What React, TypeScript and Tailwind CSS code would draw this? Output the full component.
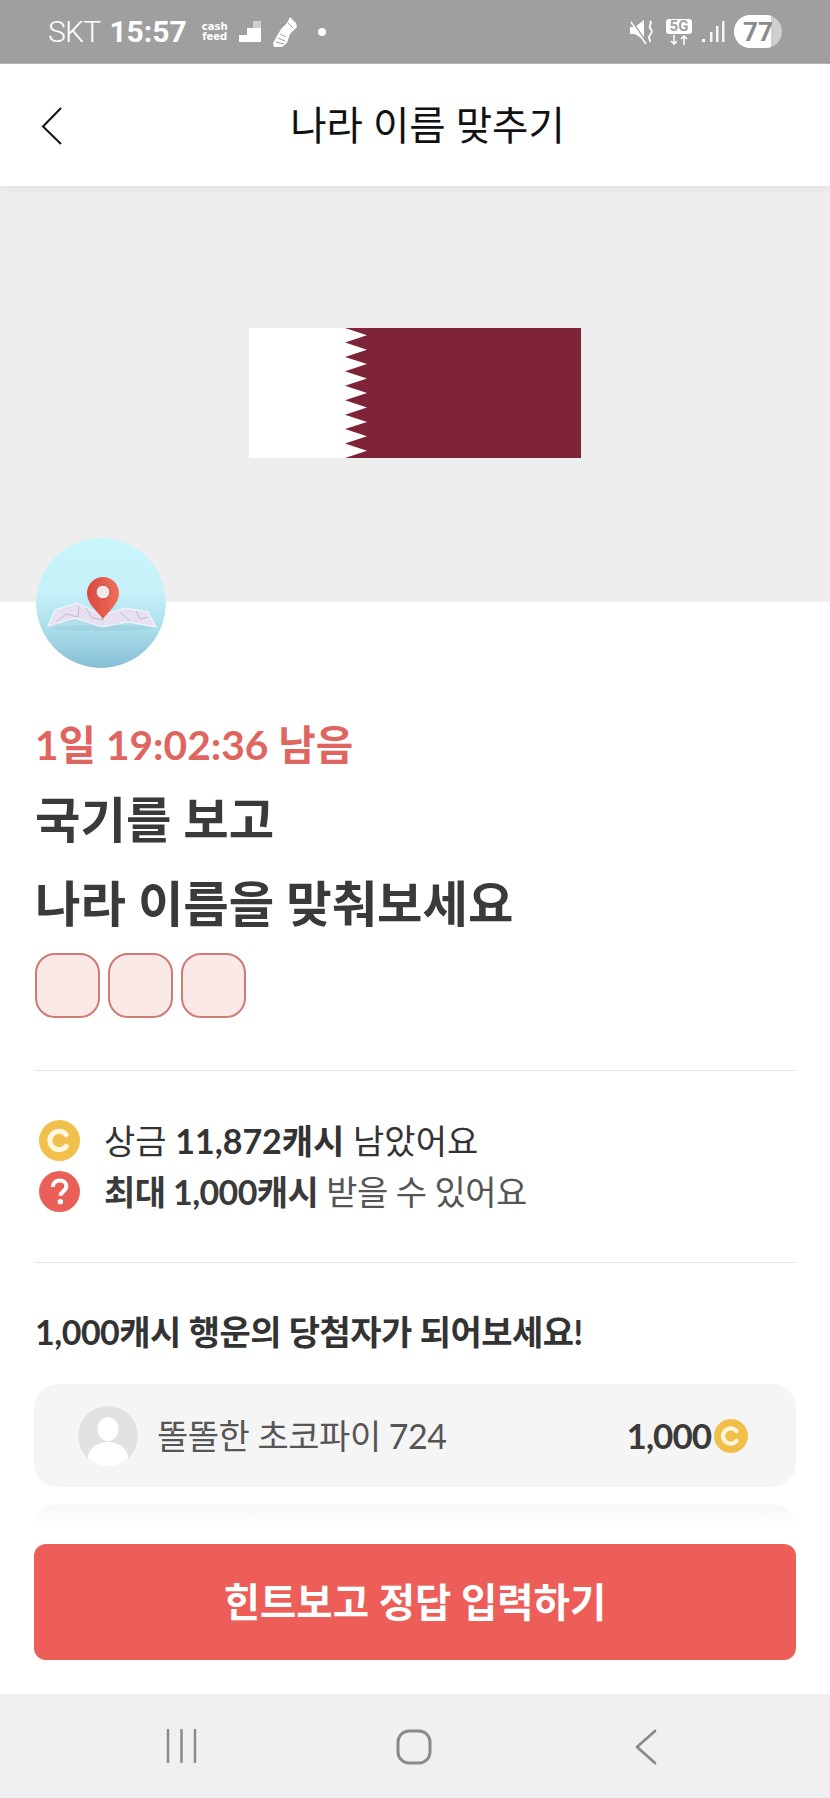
const font = "font-['Lato','Noto_Sans_CJK_KR',sans-serif]";

const Coin = ({ size }: { size: number }) => (
  <svg width={size} height={size} viewBox="0 0 40 40" className="shrink-0">
    <circle cx="20" cy="20" r="20" fill="#f1c04a" />
    <path d="M26.5 14.2a9 9 0 1 0 0 11.6" fill="none" stroke="#fff6df" strokeWidth="5" strokeLinecap="round" />
  </svg>
);

const Question = () => (
  <svg width="41" height="41" viewBox="0 0 40 40" className="shrink-0">
    <circle cx="20" cy="20" r="20" fill="#ea5f58" />
    <path d="M13.5 15.5c0-3.8 2.9-6.2 6.7-6.2 3.700 0 6.500 2.300 6.500 5.600 0 4.800-5.700 5-5.700 9.300" fill="none" stroke="#fff" strokeWidth="4" />
    <circle cx="20.800" cy="30" r="2.700" fill="#fff" />
  </svg>
);

const QatarFlag = () => {
  const teeth = 9;
  const h = 130;
  const step = h / teeth;
  let d = "M96 0";
  for (let i = 0; i < teeth; i++) {
    d += ` L118 ${step * i + step / 2} L96 ${step * (i + 1)}`;
  }
  d += " L0 130 L0 0 Z";
  return (
    <svg width="332" height="130" viewBox="0 0 332 130" className="block">
      <rect width="332" height="130" fill="#7f2339" />
      <path d={d} fill="#fff" />
    </svg>
  );
};

const MapBadge = () => (
  <svg width="130" height="130" viewBox="0 0 130 130" className="block rounded-full">
    <defs>
      <linearGradient id="bg" x1="0" y1="0" x2="0" y2="1">
        <stop offset="0" stopColor="#c9f5fd" />
        <stop offset="0.42" stopColor="#c6f1f9" />
        <stop offset="0.72" stopColor="#a9dce9" />
        <stop offset="1" stopColor="#86bed5" />
      </linearGradient>
      <linearGradient id="pin" x1="0" y1="0" x2="1" y2="0">
        <stop offset="0" stopColor="#d9483f" />
        <stop offset="1" stopColor="#f0705a" />
      </linearGradient>
    </defs>
    <circle cx="65" cy="65" r="65" fill="url(#bg)" />
    <ellipse cx="66" cy="90" rx="50" ry="3" fill="#8fc3d6" opacity="0.35" />
    <path d="M12 88 L19 72 L41 65 L66 77 L89 70 L112 74 L120 89 L92 84 L66 89 L39 80 Z" fill="#e6e0f1" stroke="#f6f4fb" strokeWidth="1.200" />
    <path d="M20 84 L30 76 L42 79 L43 68 M50 70 L56 80 L68 82 M84 74 L94 83 M100 73 L104 81 L112 79" fill="none" stroke="#bdb3cf" strokeWidth="0.900" />
    <path d="M51 55 a16 16 0 0 1 32 0 C83 66 72 74 67 81 C62 74 51 66 51 55 Z" fill="url(#pin)" />
    <circle cx="67" cy="54" r="7" fill="#f4e9e4" stroke="#c8473f" strokeWidth="1" />
  </svg>
);

const Shoe = () => (
  <svg width="26" height="32" viewBox="0 0 26 32">
    <path d="M17 1 L23 7 L24 11 L17 18 L14 27 L9 31 L1 31 L0 27 L4 20 L8 13 L11 10 L14 7 Z" fill="#fff" />
    <path d="M7 18l6 3M5 22l7 3M3 26l8 2M15 7l5 5" fill="none" stroke="#9f9f9f" strokeWidth="1" />
  </svg>
);

const StatusBar = () => (
  <div className="h-16 shrink-0 bg-[#9f9f9f] flex items-center text-white pl-12 pr-[48px] border-b border-[#b8b8b8] font-['Roboto','Noto_Sans',sans-serif]">
    <span className="text-[30px] font-light leading-none tracking-tight">SKT</span>
    <span className="text-[30px] font-bold leading-none ml-[9px]">15:57</span>
    <span className="font-['DejaVu_Sans',sans-serif] text-[10px] font-bold leading-[10px] text-center ml-[12px] w-8">
      cash
      <br />
      feed
    </span>
    <svg width="22" height="22" viewBox="0 0 22 22" className="ml-[8px]">
      <rect x="14" y="0" width="8" height="8" fill="#cfcfcf" />
      <path d="M8 7h14v7H8z M0 14h22v7H0z" fill="#fff" />
    </svg>
    <div className="ml-[12px]">
      <Shoe />
    </div>
    <span className="size-2 rounded-full bg-white ml-[19px]" />
    <div className="ml-auto flex items-center">
      <svg width="24" height="26" viewBox="0 0 24 26" fill="#fff">
        <path d="M0 8h5l9-7v20l-9-6H0z" />
        <path d="M1 1l15 22" stroke="#9f9f9f" strokeWidth="2" />
        <path d="M1 3l15 22" stroke="#fff" strokeWidth="1.500" />
        <path d="M20 2c3 3-2 4 0 7s3 3 0 7 1 4 0 7" fill="none" stroke="#fff" strokeWidth="1.800" />
      </svg>
      <div className="ml-[12px] flex flex-col items-center w-[26px]">
        <span className="bg-white text-[#9f9f9f] rounded-[3px] w-[26px] h-[15px] text-[15px] font-bold leading-[15px] text-center">5G</span>
        <svg width="20" height="10" viewBox="0 0 20 10" className="mt-[1px]">
          <path d="M5 0v9M2 6l3 3 3-3M15 10V1M12 4l3-3 3 3" fill="none" stroke="#fff" strokeWidth="1.500" />
        </svg>
      </div>
      <svg width="24" height="24" viewBox="0 0 24 24" className="ml-[9px]" fill="#fff">
        <rect x="1" y="19" width="3" height="3" />
        <rect x="9" y="12" width="2.500" height="10" opacity="0.900" />
        <rect x="15" y="6" width="2.500" height="16" opacity="0.900" />
        <rect x="21" y="1" width="2.500" height="21" opacity="0.900" />
      </svg>
      <div className="ml-[9px] relative w-[48px] h-[33px] rounded-full overflow-hidden bg-[#cfcfcf] flex items-center justify-center">
        <div className="absolute inset-y-0 left-0 w-[37px] bg-white" />
        <span className="relative text-[26px] font-bold text-[#8a8a8a] leading-none">77</span>
      </div>
    </div>
  </div>
);

const App = () => {
  return (
    <div className={`${font} w-[830px] h-[1798px] bg-white flex flex-col overflow-hidden`}>
      <StatusBar />
      <div className="h-[122px] shrink-0 bg-white flex items-center relative z-10 shadow-[0_2px_8px_rgba(0,0,0,0.06)]">
        <svg width="24" height="40" viewBox="0 0 24 40" className="ml-[40px] mt-[2px]">
          <path d="M21 2 L3 20.500 L21 38" fill="none" stroke="#111" strokeWidth="2" />
        </svg>
        <h1 className="absolute left-[25px] right-0 text-center text-[39.500px] text-[#111] leading-none">나라 이름 맞추기</h1>
      </div>

      <div className="flex-1 min-h-0 overflow-hidden">
        <div className="h-[416px] bg-[#eeeeee] flex items-start justify-center pt-[142px]">
          <QatarFlag />
        </div>
        <div className="px-[35px]">
          <div className="-mt-[64px] ml-[1px] relative w-[130px]">
            <MapBadge />
          </div>
          <p className="mt-[52px] text-[40.700px] font-bold text-[#df6660] leading-[50px]">1일 19:02:36 남음</p>
          <h2 className="mt-[7px] text-[49.400px] font-bold text-[#3a3a3a] leading-[84px]">
            국기를 보고
            <br />
            나라 이름을 맞춰보세요
          </h2>
          <div className="flex gap-2 mt-[8px]">
            <div className="size-[65px] rounded-[20px] border-2 border-[#cf7a74] bg-[#fbe9e7]" />
            <div className="size-[65px] rounded-[20px] border-2 border-[#cf7a74] bg-[#fbe9e7]" />
            <div className="size-[65px] rounded-[20px] border-2 border-[#cf7a74] bg-[#fbe9e7]" />
          </div>
        </div>
        <div className="mx-[34px] mt-[52px] border-t border-[#e6e6e6]" />
        <div className="mx-[34px] pt-[48px] pb-[49px] text-[34px] text-[#333] flex flex-col gap-[8px]">
          <div className="flex items-center h-[43px] pl-[5px]">
            <Coin size={41} />
            <span className="ml-[24px]">
              상금 <b className="font-bold">11,872캐시</b> 남았어요
            </span>
          </div>
          <div className="flex items-center h-[43px] pl-[5px]">
            <Question />
            <span className="ml-[24px] text-[#555] tracking-[-0.6px]">
              <b className="font-bold text-[#3a3a3a]">최대 1,000캐시</b> 받을 수 있어요
            </span>
          </div>
        </div>
        <div className="mx-[34px] border-t border-[#e6e6e6]" />
        <p className="mx-[35px] mt-[47px] text-[34px] font-bold text-[#333] leading-[44px] tracking-[-0.5px]">1,000캐시 행운의 당첨자가 되어보세요!</p>
        <div className="mx-[34px] mt-[30px] h-[103px] rounded-[24px] bg-[#f5f5f5] flex items-center pl-[44px] pr-[48px]">
          <svg width="60" height="60" viewBox="0 0 60 60" className="shrink-0 rounded-full">
            <circle cx="30" cy="30" r="30" fill="#e2e2e2" />
            <ellipse cx="30" cy="23" rx="10.500" ry="12" fill="#fff" />
            <ellipse cx="30" cy="52" rx="20" ry="16" fill="#fff" />
          </svg>
          <span className="ml-[19px] text-[34px] text-[#555] tracking-[-0.5px]">똘똘한 초코파이 724</span>
          <span className="ml-auto text-[35px] font-bold text-[#3a3a3a] tracking-[-1px] mr-[3px]">1,000</span>
          <Coin size={34} />
        </div>
        <div className="mx-[34px] mt-[17px] h-[24px] rounded-t-[24px] bg-gradient-to-b from-[#f7f7f7] to-white" />
      </div>

      <div className="shrink-0 bg-white px-[34px] pb-[34px]">
        <button className="w-full h-[116px] rounded-[12px] bg-[#ec5e57] text-white text-[39.500px] font-bold leading-none">힌트보고 정답 입력하기</button>
      </div>

      <div className="h-[104px] shrink-0 bg-[#f0f0f2] flex items-start pt-[35px]">
        <svg width="32" height="34" viewBox="0 0 32 34" className="ml-[166px]">
          <path d="M2 1v32M15.500 1v32M29 1v32" stroke="#8a8a8a" strokeWidth="2.500" strokeLinecap="round" />
        </svg>
        <svg width="36" height="36" viewBox="0 0 36 36" className="ml-[198px]">
          <rect x="2" y="2" width="32" height="32" rx="11" fill="none" stroke="#8a8a8a" strokeWidth="3" />
        </svg>
        <svg width="24" height="36" viewBox="0 0 24 36" className="ml-[202px]">
          <path d="M21 2 L3 18 L21 34" fill="none" stroke="#8a8a8a" strokeWidth="2.800" strokeLinecap="round" strokeLinejoin="round" />
        </svg>
      </div>
    </div>
  );
};

export default App;
